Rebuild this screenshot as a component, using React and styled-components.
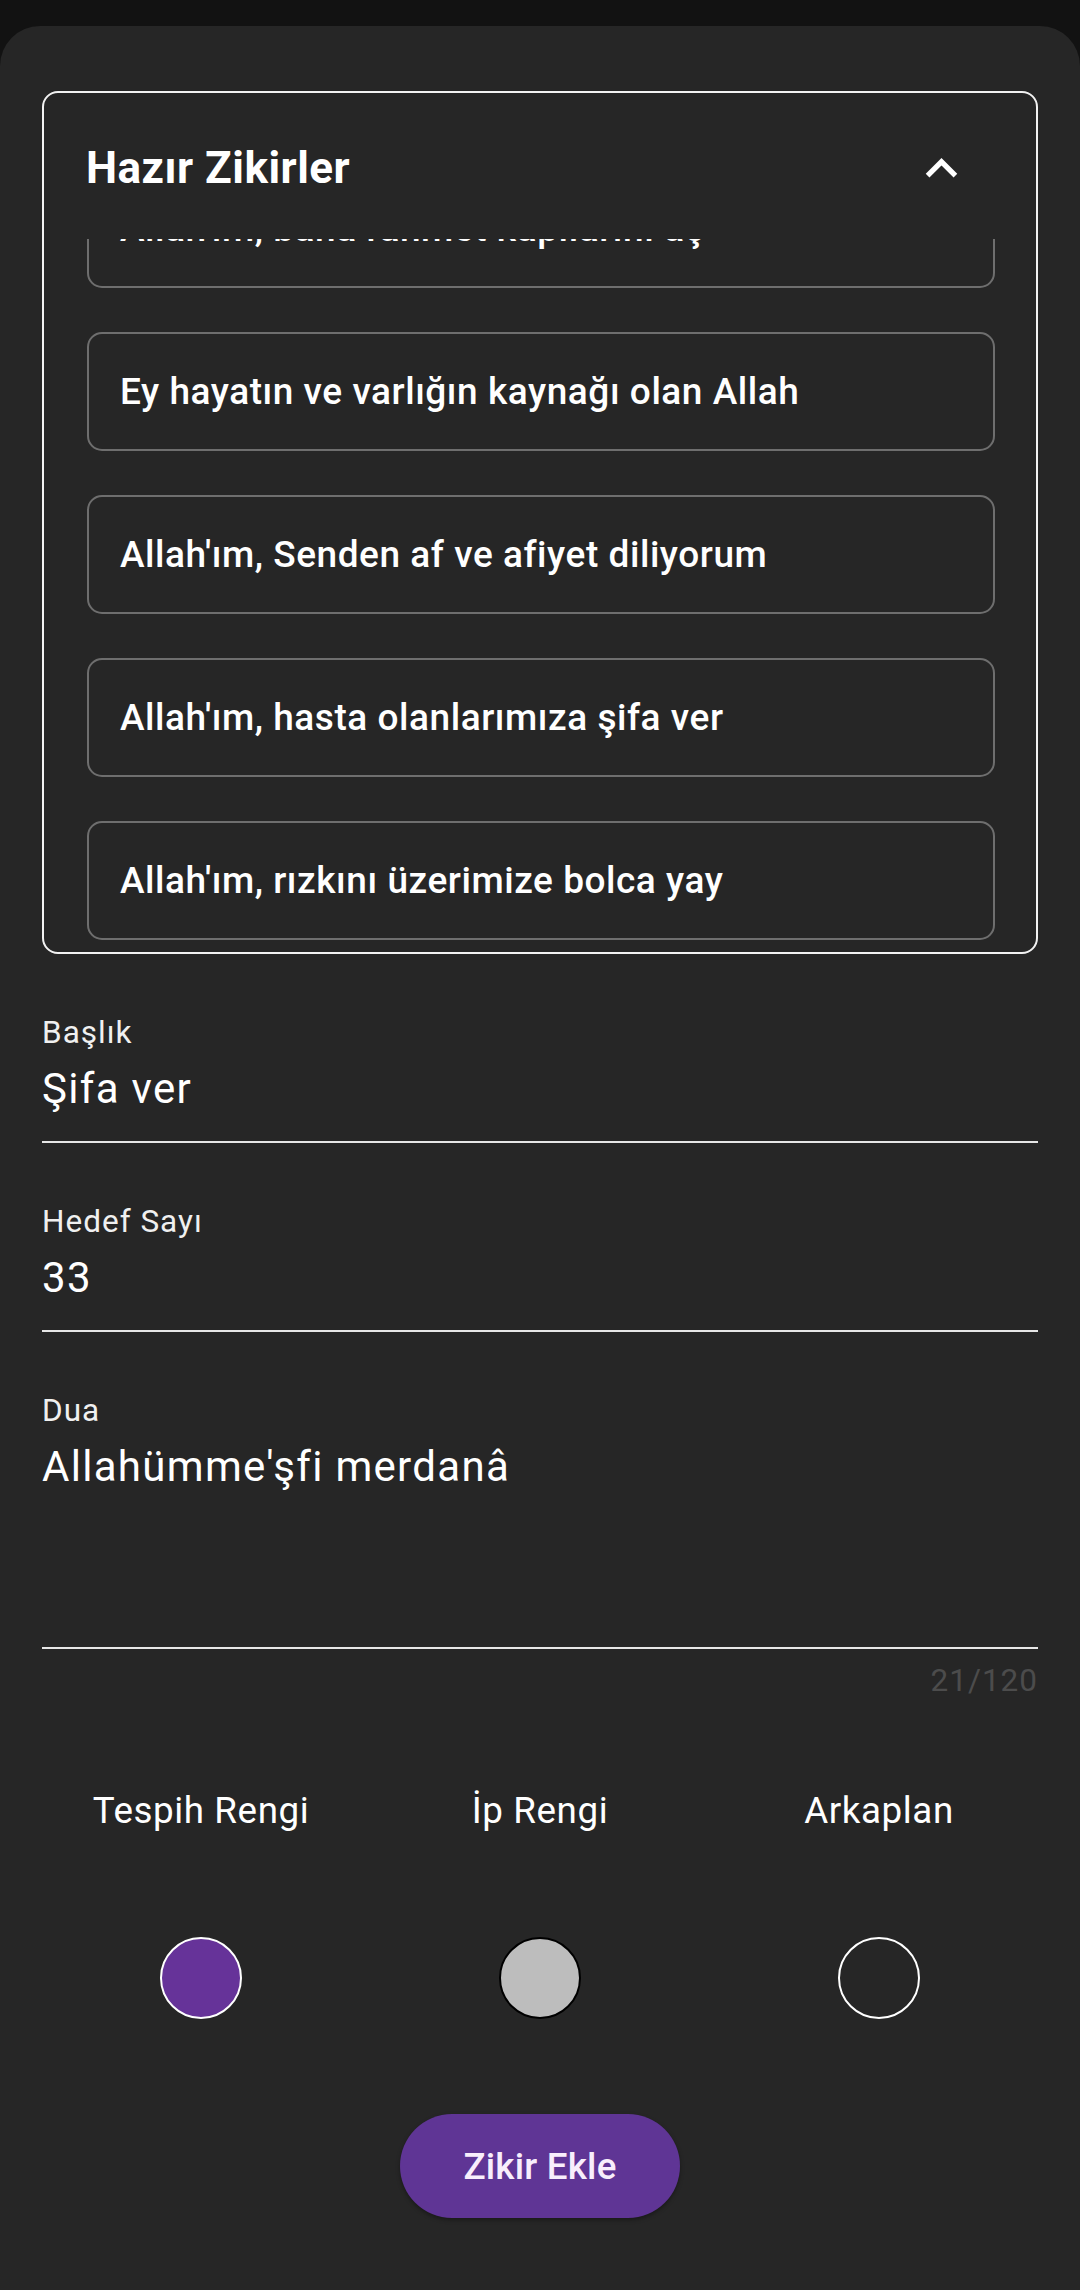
import React, { useLayoutEffect, useRef } from "react";
import styled, { createGlobalStyle } from "styled-components";

const GlobalStyle = createGlobalStyle`
  html, body {
    margin: 0;
    padding: 0;
    background: #121212;
    font-family: Roboto, "Noto Sans", "Liberation Sans", sans-serif;
    color: #ffffff;
  }
  * {
    box-sizing: border-box;
  }
`;

const Screen = styled.div`
  height: 2290px;
  padding-top: 26px;
  overflow: hidden;
`;

const Sheet = styled.div`
  height: 100%;
  background: #262626;
  border-radius: 40px 40px 0 0;
  padding: 65px 42px 0 42px;
  display: flex;
  flex-direction: column;
`;

const Accordion = styled.div`
  border: 2px solid #f2f2f2;
  border-radius: 16px;
  display: flex;
  flex-direction: column;
  overflow: hidden;
`;

const AccordionHeader = styled.div`
  height: 146px;
  display: flex;
  align-items: center;
  justify-content: space-between;
  padding: 4px 63px 0 42px;
`;

const AccordionTitle = styled.div`
  font-size: 44px;
  font-weight: 700;
  letter-spacing: 0.5px;
`;

const PresetList = styled.div`
  height: 713px;
  overflow-y: auto;
  scrollbar-width: none;
  padding: 0 41px 12px 43px;
  display: flex;
  flex-direction: column;
  gap: 44px;
  &::-webkit-scrollbar {
    display: none;
  }
`;

const PresetItem = styled.div`
  flex: 0 0 119px;
  border: 2px solid #6e6e6e;
  border-radius: 15px;
  display: flex;
  align-items: center;
  padding-left: 31px;
  font-size: 37px;
  font-weight: 500;
  letter-spacing: 0.55px;
  white-space: nowrap;
`;

const Fields = styled.div`
  margin-top: 60px;
  display: flex;
  flex-direction: column;
  gap: 60px;
`;

const Field = styled.div`
  display: flex;
  flex-direction: column;
  border-bottom: 2px solid #e6e6e6;
  padding-bottom: 27px;
`;

const FieldLabel = styled.div`
  font-size: 31.5px;
  line-height: 37px;
  color: #f0f0f0;
  letter-spacing: 1px;
`;

const FieldValue = styled.div`
  margin-top: 13px;
  font-size: 42px;
  line-height: 50px;
  min-height: ${(p) => p.$minHeight || 50}px;
  letter-spacing: 1.3px;
`;

const Counter = styled.div`
  margin-top: 13px;
  text-align: right;
  font-size: 31.5px;
  line-height: 37px;
  color: #4c4c4c;
  letter-spacing: 1px;
`;

const ColorGrid = styled.div`
  margin-top: 93px;
  display: grid;
  grid-template-columns: repeat(3, 339px);
  justify-content: center;
  margin-left: -42px;
  margin-right: -42px;
  row-gap: 108px;
`;

const ColorLabel = styled.div`
  text-align: center;
  font-size: 36.75px;
  line-height: 37px;
  letter-spacing: 0.6px;
`;

const Swatch = styled.div`
  justify-self: center;
  width: 82px;
  height: 82px;
  border-radius: 50%;
  background: ${(p) => p.$color};
  border: 2.5px solid ${(p) => p.$ring};
`;

const ButtonRow = styled.div`
  margin-top: 95px;
  display: flex;
  justify-content: center;
`;

const AddButton = styled.button`
  width: 280px;
  height: 104px;
  border: none;
  border-radius: 52px;
  background: #5f3595;
  color: #f8eefc;
  font-family: Roboto, "Noto Sans", sans-serif;
  font-size: 36.75px;
  font-weight: 500;
  letter-spacing: 0.2px;
  box-shadow: 0 2px 4px rgba(0, 0, 0, 0.35);
`;

const ChevronUp = () => (
  <svg width="63" height="63" viewBox="0 0 24 24" fill="#ffffff">
    <path d="M12 8l-6 6 1.41 1.41L12 10.83l4.59 4.58L18 14z" />
  </svg>
);

const presets = [
  "Allah'ım, bana rahmet kapılarını aç",
  "Ey hayatın ve varlığın kaynağı olan Allah",
  "Allah'ım, Senden af ve afiyet diliyorum",
  "Allah'ım, hasta olanlarımıza şifa ver",
  "Allah'ım, rızkını üzerimize bolca yay",
];

const colors = [
  { label: "Tespih Rengi", color: "#663399", ring: "#ffffff" },
  { label: "İp Rengi", color: "#bdbdbd", ring: "#000000" },
  { label: "Arkaplan", color: "transparent", ring: "#ffffff" },
];

export default function App() {
  const listRef = useRef(null);

  useLayoutEffect(() => {
    if (listRef.current) listRef.current.scrollTop = 70;
  }, []);

  return (
    <Screen>
      <GlobalStyle />
      <Sheet>
        <Accordion>
          <AccordionHeader>
            <AccordionTitle>Hazır Zikirler</AccordionTitle>
            <ChevronUp />
          </AccordionHeader>
          <PresetList ref={listRef}>
            {presets.map((p) => (
              <PresetItem key={p}>{p}</PresetItem>
            ))}
          </PresetList>
        </Accordion>

        <Fields>
          <Field>
            <FieldLabel>Başlık</FieldLabel>
            <FieldValue>Şifa ver</FieldValue>
          </Field>
          <Field>
            <FieldLabel>Hedef Sayı</FieldLabel>
            <FieldValue>33</FieldValue>
          </Field>
          <div>
            <Field>
              <FieldLabel>Dua</FieldLabel>
              <FieldValue $minHeight={178}>Allahümme'şfi merdanâ</FieldValue>
            </Field>
            <Counter>21/120</Counter>
          </div>
        </Fields>

        <ColorGrid>
          {colors.map((c) => (
            <ColorLabel key={c.label}>{c.label}</ColorLabel>
          ))}
          {colors.map((c) => (
            <Swatch key={c.label} $color={c.color} $ring={c.ring} />
          ))}
        </ColorGrid>

        <ButtonRow>
          <AddButton>Zikir Ekle</AddButton>
        </ButtonRow>
      </Sheet>
    </Screen>
  );
}
